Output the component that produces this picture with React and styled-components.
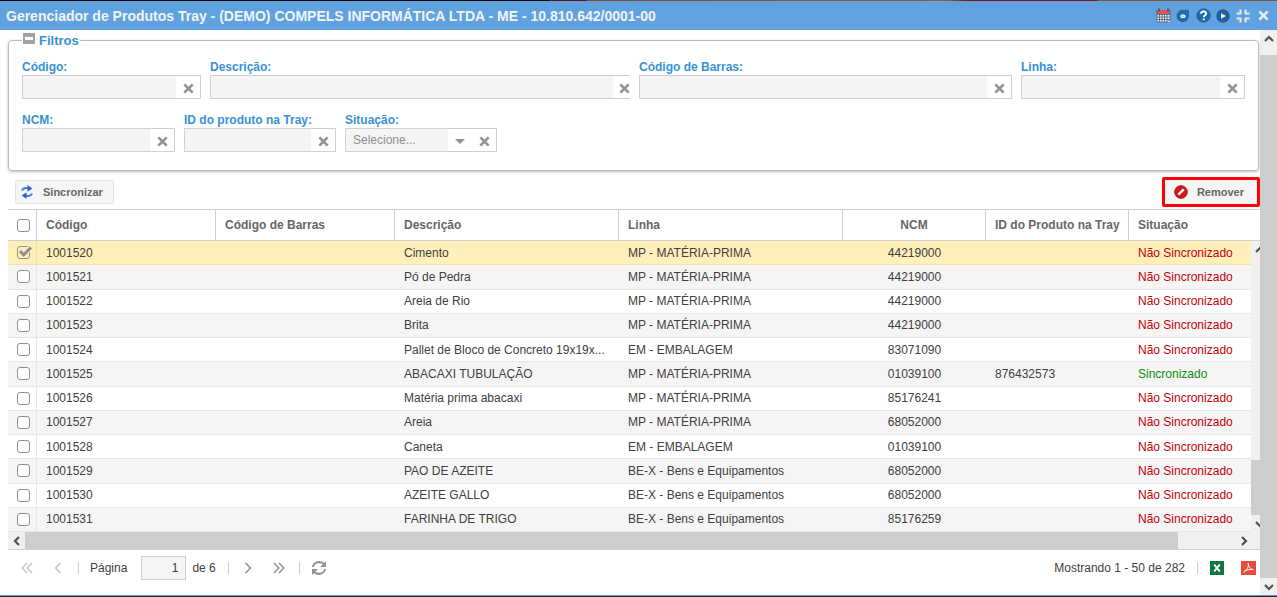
import { useState } from 'react';
import styled, { createGlobalStyle } from 'styled-components';

const GlobalStyle = createGlobalStyle`
  * {
    box-sizing: border-box;
  }

  body {
    margin: 0;
    background: #fff;
    color: #404040;
    font: 12px/16px 'Liberation Sans', Arial, sans-serif;
  }

  button,
  input,
  select {
    font: inherit;
    margin: 0;
  }
`;

const products = [
  ['1001520', 'Cimento', 'MP - MATÉRIA-PRIMA', '44219000'],
  ['1001521', 'Pó de Pedra', 'MP - MATÉRIA-PRIMA', '44219000'],
  ['1001522', 'Areia de Rio', 'MP - MATÉRIA-PRIMA', '44219000'],
  ['1001523', 'Brita', 'MP - MATÉRIA-PRIMA', '44219000'],
  ['1001524', 'Pallet de Bloco de Concreto 19x19x...', 'EM - EMBALAGEM', '83071090'],
  ['1001525', 'ABACAXI TUBULAÇÃO', 'MP - MATÉRIA-PRIMA', '01039100', '876432573'],
  ['1001526', 'Matéria prima abacaxi', 'MP - MATÉRIA-PRIMA', '85176241'],
  ['1001527', 'Areia', 'MP - MATÉRIA-PRIMA', '68052000'],
  ['1001528', 'Caneta', 'EM - EMBALAGEM', '01039100'],
  ['1001529', 'PAO DE AZEITE', 'BE-X - Bens e Equipamentos', '68052000'],
  ['1001530', 'AZEITE GALLO', 'BE-X - Bens e Equipamentos', '68052000'],
  ['1001531', 'FARINHA DE TRIGO', 'BE-X - Bens e Equipamentos', '85176259'],
];

const Window = styled.div`
  display: flex;
  flex-direction: column;
  min-height: 100vh;
  border-bottom: 1px solid #20252b;
`;

const Backdrop = styled.div`
  height: 1px;
  background: linear-gradient(
    90deg,
    #000 43%,
    #5c0f18 43%,
    #6b1019 46%,
    #7a5128 46%,
    #8a5f2a 74%,
    #7c1220 76%,
    #8d1224 86%,
    #7d5a2c 86%
  );
`;

const TitleBar = styled.header`
  display: flex;
  align-items: center;
  height: 29px;
  padding: 0 6px;
  background: #60a1df;
`;

const Title = styled.h1`
  flex: 1;
  margin: 0;
  color: #f1f5f9;
  font-size: 14px;
  font-weight: bold;
  line-height: 20px;
  white-space: nowrap;
`;

const Tools = styled.div`
  display: flex;
  gap: 4px;
`;

const IconButton = styled.button`
  display: flex;
  align-items: center;
  justify-content: center;
  width: 16px;
  height: 16px;
  padding: 0;
  border: none;
  background: transparent;
  color: ${(props) => props.$color || '#929292'};
`;

const Body = styled.div`
  display: flex;
  flex: 1;
  border-bottom: 1px solid #5b9bd8;
`;

const Content = styled.main`
  flex: 1;
  min-width: 0;
  padding-left: 8px;
`;

const Filters = styled.fieldset`
  min-width: 0;
  margin: 0 1px 0 0;
  padding: 8px 13px 18px;
  border: 1px solid #bdbdbd;
  border-radius: 4px;
  box-shadow: 0 1px 3px #bbb;
`;

const Legend = styled.legend`
  display: flex;
  align-items: center;
  gap: 4px;
  height: 21px;
  padding: 0 1px;
  color: #3892d4;
  font-size: 13px;
  font-weight: bold;
`;

const CollapseButton = styled.button`
  display: flex;
  padding: 0;
  margin-bottom: 4px;
  border: none;
  background: none;
`;

const FilterRow = styled.div`
  display: grid;
  grid-template-columns: ${(props) => props.$columns};
  gap: 9px;

  & + & {
    margin-top: 13px;
  }
`;

const FieldLabel = styled.label`
  display: block;
  color: #3892d4;
  font-weight: bold;
`;

const FieldBox = styled.div`
  display: flex;
  height: 24px;
  border: 1px solid #cfcfcf;
  border-right-width: ${(props) => (props.$clipped ? 0 : 1)}px;
`;

const FieldInput = styled.input`
  flex: 1;
  width: 0;
  padding: 0 7px;
  border: none;
  background: #f4f4f4;
`;

const FieldSelect = styled.select`
  flex: 1;
  width: 0;
  padding: 0 7px;
  appearance: none;
  border: none;
  border-radius: 0;
  background: #f4f4f4;
  color: #909090;
`;

const Trigger = styled.button`
  display: flex;
  align-items: center;
  justify-content: ${(props) => (props.$clipped ? 'flex-end' : 'center')};
  width: ${(props) => (props.$clipped ? 17 : 24)}px;
  padding: 2px 0 0;
  border: none;
  background: #fff;
  color: #929292;
`;

const Toolbar = styled.div`
  display: flex;
  align-items: center;
  justify-content: space-between;
  height: 38px;
  padding-left: 7px;
  padding-top: 4px;
`;

const ActionButton = styled.button`
  display: flex;
  align-items: center;
  gap: 9px;
  height: 24px;
  padding: 0 10px 0 4px;
  border: 1px solid #e2e2e2;
  border-radius: 2px;
  background: #f5f5f5;
  color: #666;
  font-size: 11px;
  font-weight: bold;

  ${(props) =>
    props.$highlighted &&
    `
      height: 30px;
      padding: 0 13px 0 9px;
      border: 3px solid #fe0009;
    `}
`;

const GridTable = styled.table`
  width: 100%;
  table-layout: fixed;
  border-collapse: separate;
  border-spacing: 0;
`;

const HeaderCell = styled.th`
  height: 32px;
  padding: 0 9px;
  border: solid #d0d0d0;
  border-width: 1px 1px 1px 0;
  color: #666;
  text-align: ${(props) => props.$align || 'left'};
  white-space: nowrap;

  &:last-child {
    border-right: none;
  }
`;

const CheckHeaderCell = styled(HeaderCell)`
  padding-right: 0;
`;

const GridBody = styled.div`
  display: flex;
  height: 291px;
`;

const Rows = styled.div`
  flex: 1;
  min-width: 0;

  ${GridTable} {
    height: 100%;
  }
`;

const Row = styled.tr`
  background: ${(props) => (props.$selected ? '#ffefbb' : '#fff')};

  &:nth-child(even) {
    background: ${(props) => (props.$selected ? '#ffefbb' : '#f5f5f5')};
  }
`;

const Cell = styled.td`
  padding: 0 9px;
  border-bottom: 1px solid ${(props) => (props.$selected ? '#f5e2a8' : '#e7e7e7')};
  color: ${(props) => props.$color || '#404040'};
  text-align: ${(props) => props.$align || 'left'};
  white-space: nowrap;
`;

const CheckCell = styled(Cell)`
  padding-right: 0;
  border-right: 1px solid ${(props) => (props.$selected ? '#eddfae' : '#e7e7e7')};
`;

const CheckWrap = styled.span`
  position: relative;
  display: block;
  width: 16px;
  height: 13px;

  svg {
    position: absolute;
    top: 0;
    left: 0;
    pointer-events: none;
  }
`;

const Check = styled.input`
  display: block;
  width: 13px;
  height: 13px;
  appearance: none;
  border: 1px solid #8f8f8f;
  border-radius: 3px;
  background: ${(props) => (props.checked ? 'transparent' : '#fff')};
`;

const VerticalBar = styled.div`
  display: flex;
  flex-direction: column;
  width: ${(props) => props.$width}px;
  background: #f0f0f0;
  overflow: hidden;
`;

const HorizontalBar = styled.div`
  display: flex;
  height: 18px;
  border-bottom: 1px solid #cfcfcf;
  background: #f0f0f0;
`;

const ScrollButton = styled.button`
  display: flex;
  flex: none;
  align-items: center;
  justify-content: center;
  width: 17px;
  height: 17px;
  padding: 0;
  border: none;
  background: #f0f0f0;
  color: #505050;
`;

const Thumb = styled.div`
  flex: ${(props) => props.$grow};
  background: #cdcdcd;
`;

const Track = styled.div`
  flex: ${(props) => props.$grow};
`;

const Pager = styled.nav`
  display: flex;
  align-items: center;
  height: 36px;
  padding: 0 4px 0 11px;
`;

const PagerGroup = styled.div`
  display: flex;
  gap: 15px;
`;

const Separator = styled.span`
  width: 1px;
  height: 12px;
  margin: 0 11px 0 12px;
  background: #cfcfcf;
`;

const PageInput = styled.input`
  width: 45px;
  height: 24px;
  margin: 0 6px 0 14px;
  padding: 0 7px;
  border: 1px solid #cfcfcf;
  background: #f5f5f5;
  color: #404040;
  text-align: right;
`;

const Summary = styled.span`
  margin-left: auto;
`;

function ClearIcon() {
  return (
    <svg width="11" height="11" viewBox="0 0 10 10" aria-hidden="true">
      <path d="M1.2 1.2l7.6 7.6M8.8 1.2L1.2 8.8" stroke="currentColor" strokeWidth="2.4" />
    </svg>
  );
}

function Chevron({ angle = 0 }) {
  return (
    <svg width="10" height="10" viewBox="0 0 10 10" aria-hidden="true">
      <path
        d="M1 7l4-4 4 4"
        fill="none"
        stroke="currentColor"
        strokeWidth="2.2"
        transform={`rotate(${angle} 5 5)`}
      />
    </svg>
  );
}

function PageArrow({ double, next }) {
  return (
    <svg width="12" height="12" viewBox="0 0 12 12" aria-hidden="true">
      <g fill="none" stroke="currentColor" strokeWidth="1.5" transform={next ? 'rotate(180 6 6)' : undefined}>
        <path d={double ? 'M6 1L1.2 6 6 11M11 1L6.2 6l4.8 5' : 'M8.5 1L3.5 6l5 5'} />
      </g>
    </svg>
  );
}

function CalendarIcon() {
  return (
    <svg width="15" height="15" viewBox="0 0 15 15" aria-hidden="true">
      <path d="M1 2h13v12H1z" fill="#f4f5f8" />
      <path d="M1 2h13v4H1z" fill="#e0565d" />
      <path d="M3 .5v3M12 .5v3" stroke="#4b4554" strokeWidth="1.5" />
      <path d="M1 6.5h13M1 9h13M1 11.5h13M3.5 6v8M6 6v8M8.5 6v8M11 6v8" stroke="#3f5679" strokeWidth=".8" />
      <path d="M1 2v12h10l3-2V2" fill="none" stroke="#3f5679" strokeWidth=".7" />
    </svg>
  );
}

function BadgeIcon() {
  return (
    <svg width="14" height="14" viewBox="0 0 14 14" aria-hidden="true">
      <path d="M6.500.8H11q2 0 2 2V7A6.200 6.200 0 1 1 6.500.8z" fill="#1d6cab" />
      <rect x="4.500" y="5.500" width="5" height="3.500" rx="1.500" fill="#fff" />
      <path d="M5.700 7.200h2.600" stroke="#6b9cc6" />
    </svg>
  );
}

function HelpIcon() {
  return (
    <svg width="15" height="15" viewBox="0 0 15 15" aria-hidden="true">
      <circle cx="7.5" cy="7.5" r="7.2" fill="#1d6cab" />
      <path
        d="M5 5.7c.2-3 5.2-2.800 5.100 0 0 1.500-2.400 1.600-2.400 3.500M7.700 10.400v1.900"
        fill="none"
        stroke="#fff"
        strokeWidth="1.9"
      />
    </svg>
  );
}

function PlayIcon() {
  return (
    <svg width="14" height="14" viewBox="0 0 14 14" aria-hidden="true">
      <circle cx="7" cy="7" r="6.7" fill="#1d62a0" />
      <path d="M5 4.2l4.800 2.800L5 9.800z" fill="#fff" />
    </svg>
  );
}

function CompressIcon() {
  return (
    <svg width="14" height="14" viewBox="0 0 14 14" aria-hidden="true">
      <path
        d="M4.500.5v4h-4M9.500.5v4h4M4.500 13.500v-4h-4M9.500 13.500v-4h4"
        fill="none"
        stroke="currentColor"
        strokeWidth="2"
      />
    </svg>
  );
}

function SyncIcon() {
  return (
    <svg width="14" height="14" viewBox="0 0 14 14" aria-hidden="true">
      <path d="M2 5.500c.8-2 3-2.900 6-2.300" fill="none" stroke="#3c83e6" strokeWidth="2" />
      <path d="M7.500 0l4.800 3.500L7.500 6.800z" fill="#2860d8" />
      <path d="M12 8.500c-.8 2-3 2.900-6 2.300" fill="none" stroke="#3c83e6" strokeWidth="2" />
      <path d="M6.500 14l-4.800-3.500 4.800-3.300z" fill="#2860d8" />
    </svg>
  );
}

function RemoveIcon() {
  return (
    <svg width="14" height="14" viewBox="0 0 14 14" aria-hidden="true">
      <circle cx="7" cy="7" r="6.3" fill="#df1019" stroke="#8d2023" />
      <path d="M4.300 9.700l5.400-5.400" stroke="#fff" strokeWidth="2.6" />
    </svg>
  );
}

function RefreshIcon() {
  return (
    <svg width="16" height="16" viewBox="0 0 16 16" aria-hidden="true">
      <path
        d="M2 7c.6-5 8-6.5 11.3-2.7M14 9c-.6 5-8 6.5-11.3 2.7"
        fill="none"
        stroke="currentColor"
        strokeWidth="2"
      />
      <path d="M15 1v6H9zM1 15V9h6z" fill="currentColor" />
    </svg>
  );
}

function ExcelIcon() {
  return (
    <svg width="14" height="14" viewBox="0 0 14 14" aria-hidden="true">
      <path d="M0 0h14v14H0z" fill="#0f7740" />
      <path d="M4.2 3.5l5.6 7M9.8 3.5l-5.6 7" stroke="#fff" strokeWidth="2" />
    </svg>
  );
}

function PdfIcon() {
  return (
    <svg width="15" height="14" viewBox="0 0 15 14" aria-hidden="true">
      <path d="M0 0h15v14H0z" fill="#e94b3c" />
      <path
        d="M7.200 2c1 2.500-.7 6.500-4.400 9.300-.8-.9 4-3.300 9.400-2.800C10 8.600 7.300 6 7.200 2z"
        fill="none"
        stroke="#fff"
      />
    </svg>
  );
}

function Field({ id, label, clipped }) {
  return (
    <div>
      <FieldLabel htmlFor={id}>{label}</FieldLabel>
      <FieldBox $clipped={clipped}>
        <FieldInput id={id} type="text" />
        <Trigger type="button" aria-label="Limpar" $clipped={clipped}>
          <ClearIcon />
        </Trigger>
      </FieldBox>
    </div>
  );
}

function RowCheck({ label, checked, onChange }) {
  return (
    <CheckWrap>
      <Check type="checkbox" aria-label={label} checked={checked} onChange={onChange} />
      {checked && (
        <svg width="16" height="13" viewBox="0 0 16 13" aria-hidden="true">
          <path d="M3 5.2l3.700 3.600 7.300-7.300" fill="none" stroke="#ffefbb" strokeWidth="5" />
          <path d="M3 5.2l3.700 3.600 7.300-7.300" fill="none" stroke="#8f8f8f" strokeWidth="3" />
        </svg>
      )}
    </CheckWrap>
  );
}

function Columns() {
  return (
    <colgroup>
      <col width="29" />
      <col width="179" />
      <col width="179" />
      <col width="224" />
      <col width="224" />
      <col width="143" />
      <col width="143" />
      <col />
    </colgroup>
  );
}

function ProductGrid() {
  const [selected, setSelected] = useState(['1001520']);
  const allSelected = selected.length === products.length;

  function toggle(code) {
    setSelected((codes) =>
      codes.includes(code) ? codes.filter((item) => item !== code) : [...codes, code]
    );
  }

  function toggleAll() {
    setSelected(allSelected ? [] : products.map(([code]) => code));
  }

  const rows = products.map(([code, description, line, ncm, trayId]) => {
    const isSelected = selected.includes(code);

    return (
      <Row key={code} $selected={isSelected}>
        <CheckCell $selected={isSelected}>
          <RowCheck label={code} checked={isSelected} onChange={() => toggle(code)} />
        </CheckCell>
        <Cell $selected={isSelected}>{code}</Cell>
        <Cell $selected={isSelected} />
        <Cell $selected={isSelected}>{description}</Cell>
        <Cell $selected={isSelected}>{line}</Cell>
        <Cell $selected={isSelected} $align="center">{ncm}</Cell>
        <Cell $selected={isSelected}>{trayId}</Cell>
        <Cell $selected={isSelected} $color={trayId ? '#0a8f0a' : '#c80009'}>
          {trayId ? 'Sincronizado' : 'Não Sincronizado'}
        </Cell>
      </Row>
    );
  });

  return (
    <section>
      <GridTable>
        <Columns />
        <thead>
          <tr>
            <CheckHeaderCell>
              <RowCheck label="Selecionar todos" checked={allSelected} onChange={toggleAll} />
            </CheckHeaderCell>
            <HeaderCell>Código</HeaderCell>
            <HeaderCell>Código de Barras</HeaderCell>
            <HeaderCell>Descrição</HeaderCell>
            <HeaderCell>Linha</HeaderCell>
            <HeaderCell $align="center">NCM</HeaderCell>
            <HeaderCell>ID do Produto na Tray</HeaderCell>
            <HeaderCell>Situação</HeaderCell>
          </tr>
        </thead>
      </GridTable>
      <GridBody>
        <Rows>
          <GridTable>
            <Columns />
            <tbody>{rows}</tbody>
          </GridTable>
        </Rows>
        <VerticalBar $width={9}>
          <ScrollButton type="button" aria-label="Subir lista">
            <Chevron />
          </ScrollButton>
          <Track $grow={202} />
          <Thumb $grow={55} />
          <ScrollButton type="button" aria-label="Descer lista">
            <Chevron angle={180} />
          </ScrollButton>
        </VerticalBar>
      </GridBody>
      <HorizontalBar>
        <ScrollButton type="button" aria-label="Rolar para a esquerda">
          <Chevron angle={-90} />
        </ScrollButton>
        <Thumb $grow={1153} />
        <Track $grow={57} />
        <ScrollButton type="button" aria-label="Rolar para a direita">
          <Chevron angle={90} />
        </ScrollButton>
        <Track $grow={8} />
      </HorizontalBar>
    </section>
  );
}

function Pagination() {
  return (
    <Pager>
      <PagerGroup>
        <IconButton type="button" aria-label="Primeira página" $color="#c4c4c4">
          <PageArrow double />
        </IconButton>
        <IconButton type="button" aria-label="Página anterior" $color="#c4c4c4">
          <PageArrow />
        </IconButton>
      </PagerGroup>
      <Separator />
      <label htmlFor="page">Página</label>
      <PageInput id="page" type="text" defaultValue="1" />
      <span>de 6</span>
      <Separator />
      <PagerGroup>
        <IconButton type="button" aria-label="Próxima página">
          <PageArrow next />
        </IconButton>
        <IconButton type="button" aria-label="Última página">
          <PageArrow double next />
        </IconButton>
      </PagerGroup>
      <Separator />
      <IconButton type="button" aria-label="Atualizar">
        <RefreshIcon />
      </IconButton>
      <Summary>Mostrando 1 - 50 de 282</Summary>
      <Separator />
      <PagerGroup>
        <IconButton type="button" aria-label="Exportar para Excel">
          <ExcelIcon />
        </IconButton>
        <IconButton type="button" aria-label="Exportar para PDF">
          <PdfIcon />
        </IconButton>
      </PagerGroup>
    </Pager>
  );
}

function App() {
  return (
    <Window>
      <GlobalStyle />
      <Backdrop />
      <TitleBar>
        <Title>Gerenciador de Produtos Tray - (DEMO) COMPELS INFORMÁTICA LTDA - ME - 10.810.642/0001-00</Title>
        <Tools>
          <IconButton type="button" aria-label="Calendário"><CalendarIcon /></IconButton>
          <IconButton type="button" aria-label="Etiqueta"><BadgeIcon /></IconButton>
          <IconButton type="button" aria-label="Ajuda"><HelpIcon /></IconButton>
          <IconButton type="button" aria-label="Vídeo"><PlayIcon /></IconButton>
          <IconButton type="button" aria-label="Restaurar" $color="#e3eef9"><CompressIcon /></IconButton>
          <IconButton type="button" aria-label="Fechar" $color="#e3eef9"><ClearIcon /></IconButton>
        </Tools>
      </TitleBar>
      <Body>
        <Content>
          <Filters>
            <Legend>
              <CollapseButton type="button" aria-label="Recolher filtros">
                <svg width="12" height="11" viewBox="0 0 12 11" aria-hidden="true">
                  <path d="M0 0h12v11H0z" fill="#a3a3a3" />
                  <path d="M2 4h8v3H2z" fill="#fff" />
                </svg>
              </CollapseButton>
              Filtros
            </Legend>
            <FilterRow $columns="179fr 420fr 373fr 224fr">
              <Field id="codigo" label="Código:" />
              <Field id="descricao" label="Descrição:" clipped />
              <Field id="barras" label="Código de Barras:" />
              <Field id="linha" label="Linha:" />
            </FilterRow>
            <FilterRow $columns="153px 152px 152px">
              <Field id="ncm" label="NCM:" />
              <Field id="tray" label="ID do produto na Tray:" />
              <div>
                <FieldLabel htmlFor="situacao">Situação:</FieldLabel>
                <FieldBox>
                  <FieldSelect id="situacao">
                    <option>Selecione...</option>
                  </FieldSelect>
                  <Trigger type="button" aria-label="Abrir opções">
                    <svg width="10" height="5" viewBox="0 0 10 5" aria-hidden="true">
                      <path d="M0 0h10L5 5z" fill="currentColor" />
                    </svg>
                  </Trigger>
                  <Trigger type="button" aria-label="Limpar">
                    <ClearIcon />
                  </Trigger>
                </FieldBox>
              </div>
            </FilterRow>
          </Filters>
          <Toolbar>
            <ActionButton type="button">
              <SyncIcon />
              Sincronizar
            </ActionButton>
            <ActionButton type="button" $highlighted>
              <RemoveIcon />
              Remover
            </ActionButton>
          </Toolbar>
          <ProductGrid />
          <Pagination />
        </Content>
        <VerticalBar $width={17}>
          <ScrollButton type="button" aria-label="Subir">
            <Chevron />
          </ScrollButton>
          <Track $grow={8} />
          <Thumb $grow={523} />
          <ScrollButton type="button" aria-label="Descer">
            <Chevron angle={180} />
          </ScrollButton>
        </VerticalBar>
      </Body>
    </Window>
  );
}

export default App;
